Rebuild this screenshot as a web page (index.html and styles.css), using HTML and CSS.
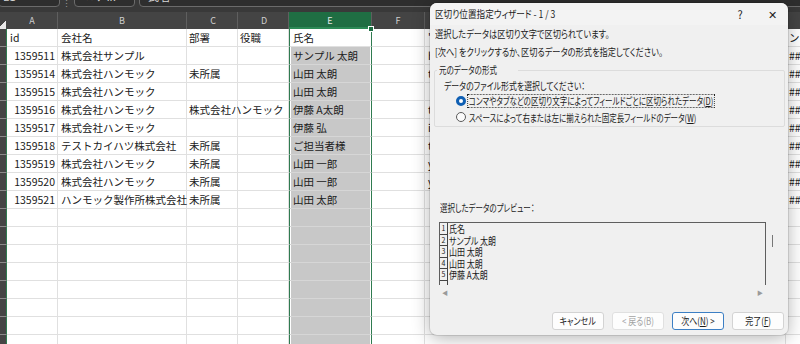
FILE: index.html
```html
<!DOCTYPE html>
<html lang="ja">
<head>
<meta charset="utf-8">
<link rel="stylesheet" href="styles.css">
</head>
<body>
<div class="app">
  <div class="topbar">
    <div class="fbox b1"><span class="ftxt">E1</span><span class="drop">▾</span></div>
    <div class="fsep">⋮</div>
    <div class="fbox b2"><span class="ftxt">✕ ✓ fx</span></div>
    <div class="fbox b3"><span class="ftxt">氏名</span></div>
  </div>
  <div class="sheet">
    <div class="row hdr">
      <div class="corner"></div><div>A</div><div>B</div><div>C</div><div>D</div><div class="ehdr">E<span class="handle"></span></div><div>F</div><div>G</div><div>H</div>
    </div>
    <div class="row"><div class="rh"></div><div>id</div><div>会社名</div><div>部署</div><div>役職</div><div class="active">氏名</div><div></div><div>'</div><div>ンコ</div></div>
    <div class="row"><div class="rh"></div><div class="num">1359511</div><div>株式会社サンプル</div><div></div><div></div><div class="sel">サンプル 太朗</div><div></div><div>h</div><div>####</div></div>
    <div class="row"><div class="rh"></div><div class="num">1359514</div><div>株式会社ハンモック</div><div>未所属</div><div></div><div class="sel">山田 太朗</div><div></div><div>t</div><div>####</div></div>
    <div class="row"><div class="rh"></div><div class="num">1359515</div><div>株式会社ハンモック</div><div></div><div></div><div class="sel">山田 太朗</div><div></div><div></div><div>####</div></div>
    <div class="row"><div class="rh"></div><div class="num">1359516</div><div>株式会社ハンモック</div><div>株式会社ハンモック</div><div></div><div class="sel">伊藤 A太朗</div><div></div><div>t</div><div>####</div></div>
    <div class="row"><div class="rh"></div><div class="num">1359517</div><div>株式会社ハンモック</div><div></div><div></div><div class="sel">伊藤 弘</div><div></div><div>i</div><div>####</div></div>
    <div class="row"><div class="rh"></div><div class="num">1359518</div><div>テストカイハツ株式会社</div><div>未所属</div><div></div><div class="sel">ご担当者様</div><div></div><div>t</div><div>####</div></div>
    <div class="row"><div class="rh"></div><div class="num">1359519</div><div>株式会社ハンモック</div><div>未所属</div><div></div><div class="sel">山田 一郎</div><div></div><div>y</div><div>####</div></div>
    <div class="row"><div class="rh"></div><div class="num">1359520</div><div>株式会社ハンモック</div><div>未所属</div><div></div><div class="sel">山田 一郎</div><div></div><div>y</div><div>####</div></div>
    <div class="row"><div class="rh"></div><div class="num">1359521</div><div>ハンモック製作所株式会社</div><div>未所属</div><div></div><div class="sel">山田 太郎</div><div></div><div></div><div>####</div></div>
    <div class="row"><div class="rh"></div><div></div><div></div><div></div><div></div><div class="sel"></div><div></div><div></div><div></div></div>
    <div class="row"><div class="rh"></div><div></div><div></div><div></div><div></div><div class="sel"></div><div></div><div></div><div></div></div>
    <div class="row"><div class="rh"></div><div></div><div></div><div></div><div></div><div class="sel"></div><div></div><div></div><div></div></div>
    <div class="row"><div class="rh"></div><div></div><div></div><div></div><div></div><div class="sel"></div><div></div><div></div><div></div></div>
    <div class="row"><div class="rh"></div><div></div><div></div><div></div><div></div><div class="sel"></div><div></div><div></div><div></div></div>
    <div class="row"><div class="rh"></div><div></div><div></div><div></div><div></div><div class="sel"></div><div></div><div></div><div></div></div>
    <div class="row"><div class="rh"></div><div></div><div></div><div></div><div></div><div class="sel"></div><div></div><div></div><div></div></div>
    <div class="row"><div class="rh"></div><div></div><div></div><div></div><div></div><div class="sel"></div><div></div><div></div><div></div></div>
  </div>

  <div class="dialog">
    <div class="titlebar">
      <span class="title"><span class="cx ttl">区切り位置指定ウィザード - 1 / 3</span></span>
      <span class="tbtn">?</span>
      <span class="tbtn close">✕</span>
    </div>
    <div class="body">
      <p class="msg"><span class="cx line">選択したデータは区切り文字で区切られています。</span></p>
      <p class="msg"><span class="cx line">[次へ] をクリックするか、区切るデータの形式を指定してください。</span></p>
      <fieldset class="group">
        <legend><span class="cx">元のデータの形式</span></legend>
        <p class="sub"><span class="cx subl">データのファイル形式を選択してください：</span></p>
        <div class="opt"><span class="radio on"></span><span class="cx focus">コンマやタブなどの区切り文字によってフィールドごとに区切られたデータ(<u>D</u>)</span></div>
        <div class="opt"><span class="radio"></span><span class="cx lbl">スペースによって右または左に揃えられた固定長フィールドのデータ(<u>W</u>)</span></div>
      </fieldset>
      <p class="plabel"><span class="cx">選択したデータのプレビュー：</span></p>
      <div class="preview">
        <div class="pinner">
          <div class="prow"><span class="pn">1</span><span class="pt"><span class="cx">氏名</span></span></div>
          <div class="prow"><span class="pn">2</span><span class="pt"><span class="cx">サンプル 太朗</span></span></div>
          <div class="prow"><span class="pn">3</span><span class="pt"><span class="cx">山田 太朗</span></span></div>
          <div class="prow"><span class="pn">4</span><span class="pt"><span class="cx">山田 太朗</span></span></div>
          <div class="prow"><span class="pn">5</span><span class="pt"><span class="cx">伊藤 A太朗</span></span></div>
          <div class="prow"><span class="pn"></span><span class="pt"></span></div>
        </div>
        <div class="vscroll"><span class="thumb"></span></div>
        <div class="hscroll"><span class="arr">◀</span><span class="arr">▶</span></div>
      </div>
      <div class="buttons">
        <button class="btn"><span class="cx mid">キャンセル</span></button>
        <button class="btn dis"><span class="cx mid">&lt; 戻る(B)</span></button>
        <button class="btn def"><span class="cx mid">次へ(<u>N</u>) &gt;</span></button>
        <button class="btn"><span class="cx mid">完了(<u>F</u>)</span></button>
      </div>
    </div>
  </div>
</div>
</body>
</html>
```

FILE: styles.css
```css
html, body {
  margin: 0;
  padding: 0;
  background: #ffffff;
}
.app {
  position: relative;
  width: 800px;
  height: 344px;
  overflow: hidden;
  font-family: "Noto Sans CJK JP", "Noto Sans", sans-serif;
  background: #ffffff;
}

/* top formula bar */
.topbar {
  height: 12px;
  background: #393939;
  display: flex;
  align-items: flex-start;
  overflow: hidden;
}
.fbox {
  box-sizing: border-box;
  height: 21px;
  margin-top: -14px;
  border: 1px solid #6b6b6b;
  border-radius: 4px;
  background: #2e2e2e;
  color: #d8d8d8;
  font-size: 11px;
  line-height: 19px;
  display: flex;
  justify-content: space-between;
  padding: 0 4px;
  overflow: hidden;
  flex: none;
}
.b1 { width: 62px; margin-left: -2px; }
.b2 { width: 61px; margin-left: 2px; padding-left: 10px; }
.b3 { width: 700px; margin-left: 4px; padding-left: 8px; }
.drop { font-size: 8px; color: #aaa; }
.fsep { width: 12px; color: #999; font-size: 9px; line-height: 8px; text-align: center; flex: none; }

/* sheet */
.sheet {
  display: flex;
  flex-direction: column;
}
.row {
  display: grid;
  grid-template-columns: 7px 51px 129px 51px 51px 83px 53px 361px 80px;
  height: 18px;
}
.row > div {
  box-sizing: border-box;
  border-right: 1px solid #e0e0e0;
  border-bottom: 1px solid #e0e0e0;
  font-size: 10.5px;
  line-height: 17px;
  padding: 0 2px 0 3px;
  white-space: nowrap;
  color: #202020;
  min-width: 0;
}
.row > div:nth-child(4),
.row > div:nth-child(5) { padding-left: 2px; }
.row > .rh {
  background: #454545;
  border-right: 1px solid #2f7b50;
  border-bottom: 1px solid #8a8a8a;
  padding: 0;
}
.row > .num {
  text-align: right;
  padding-right: 2px;
}
.row > .sel {
  background: #c8c8c8;
  border-left: 1px solid #2f7b50;
  border-right: 1px solid #2f7b50;
  border-bottom: 1px solid #d6d6d6;
  box-shadow: inset 1px 0 0 #ffffff, inset -1px 0 0 #ffffff;
  padding-left: 3px;
}
.row > .active {
  background: #ffffff;
  border-left: 1px solid #2f7b50;
  border-right: 1px solid #2f7b50;
  padding-left: 3px;
}

.hdr { height: 17px; }
.hdr > div {
  background: #444444;
  color: #cfcfcf;
  text-align: center;
  font-size: 9px;
  line-height: 17px;
  border-right: 1px solid #5f5f5f;
  border-bottom: none;
  padding: 0;
}
.hdr > .corner {
  background: linear-gradient(135deg, #444444 62%, #e8e8e8 63%);
  border-right: 1px solid #444;
}
.hdr > .ehdr {
  position: relative;
  background: #1f6e43;
  color: #e8e8e8;
  box-shadow: inset 0 -2px 0 #2c8a56;
}
.handle {
  position: absolute;
  right: -3px;
  bottom: -3px;
  width: 4px;
  height: 4px;
  background: #1f6e43;
  border: 1px solid #ffffff;
  z-index: 2;
}

/* dialog */
.dialog {
  position: absolute;
  left: 430px;
  top: 3px;
  width: 358px;
  height: 332px;
  box-sizing: border-box;
  background: #f0f0f0;
  border-radius: 7px;
  box-shadow: 0 0 0 1px rgba(0,0,0,0.10), 0 3px 18px rgba(0,0,0,0.30);
  color: #1b1b1b;
  font-size: 10px;
  font-feature-settings: "palt";
  overflow: hidden;
}
/* condensed UI text (narrow system UI face) */
.cx {
  display: inline-block;
  transform: scaleX(0.75);
  transform-origin: 0 50%;
  white-space: nowrap;
}
.cx.ttl { transform: scaleX(0.86); }
.cx.line { transform: scaleX(0.82); }
.cx.subl { transform: scaleX(0.79); }
.cx.mid { transform-origin: 50% 50%; transform: scaleX(0.8); }

.titlebar {
  height: 22px;
  display: flex;
  align-items: center;
  background: #f3f3f3;
}
.title {
  flex: 1;
  padding-left: 5px;
  line-height: 22px;
  white-space: nowrap;
}
.tbtn {
  width: 32px;
  text-align: center;
  font-size: 11px;
  color: #222;
}
.body {
  padding: 0 5px;
}
.msg {
  margin: 0;
  line-height: 18px;
  white-space: nowrap;
}
.group {
  margin: 3px -2px 0 -1px;
  padding: 3px 0 1px 8px;
  border: 1px solid #dcdcdc;
  border-radius: 2px;
  min-width: 0;
}
.group legend {
  padding: 0 2px;
  margin-left: -6px;
  line-height: 12px;
}
.sub {
  margin: 0;
  line-height: 14px;
  padding-left: 1px;
}
.opt {
  display: flex;
  align-items: center;
  height: 16px;
  padding-left: 13px;
  white-space: nowrap;
}
.radio {
  box-sizing: border-box;
  width: 10px;
  height: 10px;
  border-radius: 50%;
  border: 1px solid #5a5a5a;
  background: #fbfbfb;
  margin-right: 2px;
  flex: none;
}
.radio.on {
  border: 3px solid #0f5fb3;
  background: #ffffff;
}
.focus {
  outline: 1px dotted #222;
  outline-offset: 0;
  padding: 0 1px;
  line-height: 12px;
}
.lbl { padding: 0 1px; }

.plabel {
  margin: 74px 0 0 0;
  line-height: 14px;
  padding-left: 5px;
}
.preview {
  margin: 7px 0 0 4px;
  width: 341px;
  height: 77px;
  display: grid;
  grid-template-columns: 327px 14px;
  grid-template-rows: 63px 14px;
}
.pinner {
  box-sizing: border-box;
  border: 1px solid #5e5e5e;
  border-bottom: none;
  overflow: hidden;
}
.prow {
  display: flex;
  height: 11.5px;
  line-height: 11.5px;
}
.pn {
  box-sizing: border-box;
  width: 8px;
  font-size: 7px;
  text-align: center;
  border-right: 1px solid #444;
  border-bottom: 1px solid #444;
  flex: none;
}
.pt {
  padding-left: 1px;
  font-size: 10px;
  white-space: nowrap;
}
.pt .cx { transform: scaleX(0.8); }
.vscroll {
  position: relative;
}
.thumb {
  position: absolute;
  left: 6px;
  top: 13px;
  width: 1px;
  height: 12px;
  background: #777;
}
.hscroll {
  grid-column: 1 / 2;
  display: flex;
  justify-content: space-between;
  align-items: center;
  padding: 0 3px 0 3px;
  font-size: 6px;
  color: #9a9a9a;
}
.buttons {
  display: flex;
  justify-content: flex-end;
  gap: 8px;
  margin-top: 13px;
  margin-right: -1px;
}
.btn {
  box-sizing: border-box;
  width: 52px;
  height: 18px;
  padding: 0;
  background: #fdfdfd;
  border: 1px solid #d3d3d3;
  border-radius: 3px;
  font-family: inherit;
  font-size: 10px;
  font-feature-settings: "palt";
  color: #1b1b1b;
  line-height: 16px;
  white-space: nowrap;
}
.btn.dis { color: #a3a3a3; border-color: #e0e0e0; }
.btn.def { border-color: #3c7fc4; }
u { text-decoration-thickness: 1px; text-underline-offset: 1px; }
```
